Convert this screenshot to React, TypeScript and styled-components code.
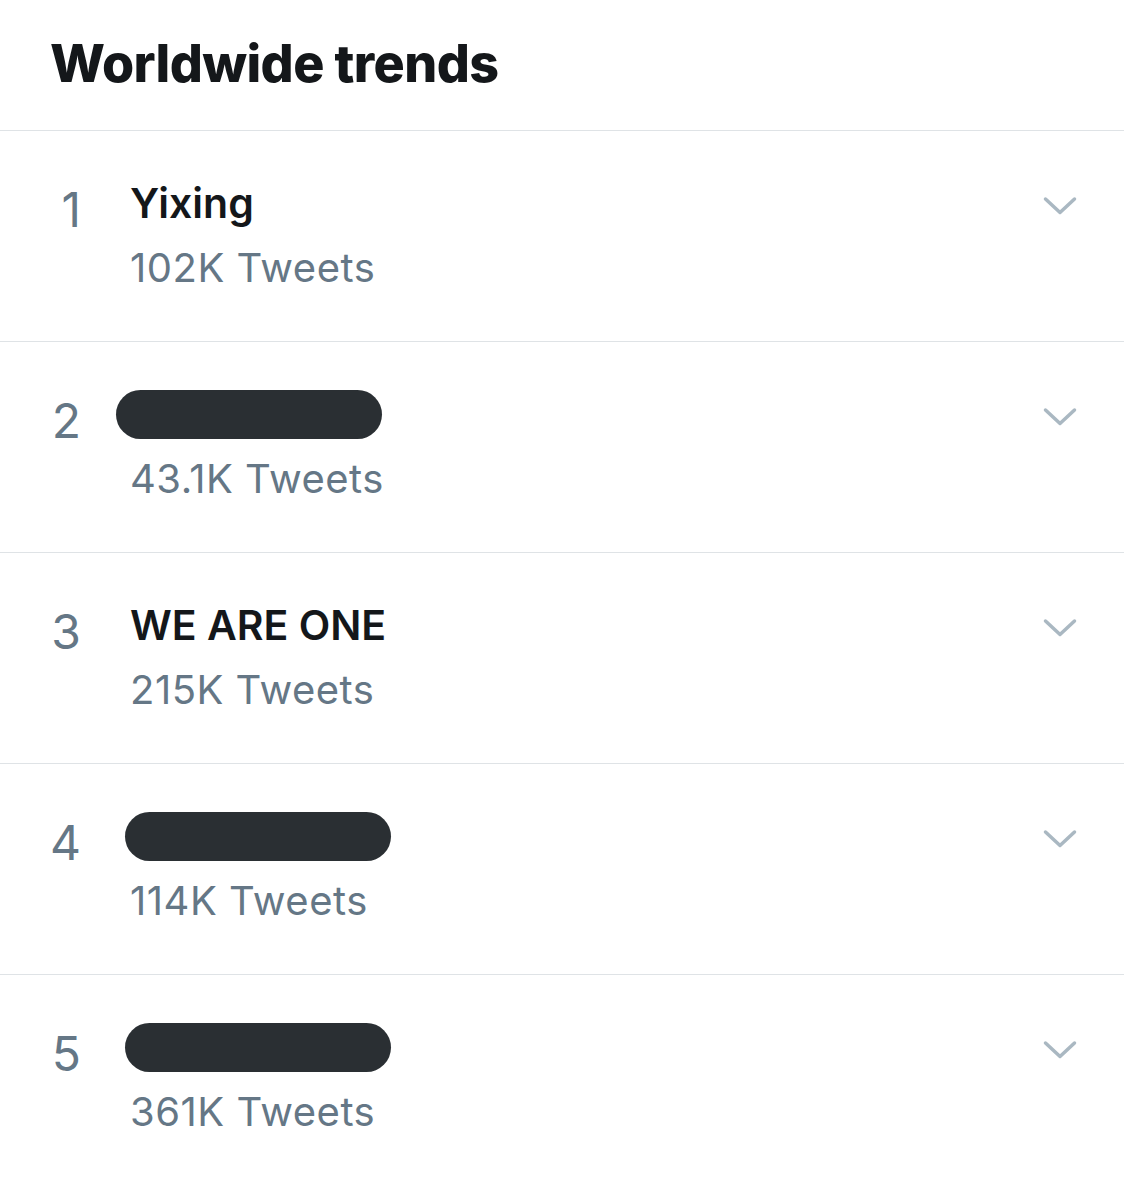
import styled, { createGlobalStyle } from 'styled-components'

const GlobalStyle = createGlobalStyle`
  body {
    margin: 0;
    background: #ffffff;
    font-family: Inter, "Noto Sans", "Liberation Sans", sans-serif;
  }
`

type Trend = {
  rank: number
  name?: string
  hiddenOffset?: number
  tweets: string
}

const trends: Trend[] = [
  { rank: 1, name: 'Yixing', tweets: '102K Tweets' },
  { rank: 2, hiddenOffset: -14, tweets: '43.1K Tweets' },
  { rank: 3, name: 'WE ARE ONE', tweets: '215K Tweets' },
  { rank: 4, hiddenOffset: -5, tweets: '114K Tweets' },
  { rank: 5, hiddenOffset: -5, tweets: '361K Tweets' },
]

export const Page = styled.div`
  width: 1124px;
  height: 1185px;
  overflow: hidden;
  background: #fff;
`

export const Header = styled.header`
  height: 131px;
  box-sizing: border-box;
  padding: 0 50px;
  display: flex;
  align-items: center;
  border-bottom: 1px solid #dfe3e6;
`

export const Title = styled.h1`
  margin: 0;
  padding-bottom: 4px;
  font-size: 52px;
  font-weight: 800;
  letter-spacing: -0.6px;
  color: #14171a;
`

export const TrendList = styled.ul`
  list-style: none;
  margin: 0;
  padding: 0;
`

export const TrendRow = styled.li`
  height: 211px;
  box-sizing: border-box;
  display: flex;
  align-items: flex-start;
  padding: 0 46px 0 50px;
  border-bottom: 1px solid #dfe3e6;

  &:last-child {
    border-bottom: none;
  }
`

export const Rank = styled.span`
  width: 31px;
  margin-top: 50px;
  text-align: right;
  font-size: 48px;
  line-height: 1.2;
  color: #657786;
`

export const Info = styled.div`
  flex: 1;
  display: flex;
  flex-direction: column;
  padding-top: 48px;
  margin-left: 49px;
`

export const TrendName = styled.strong`
  display: block;
  font-size: 41px;
  line-height: 49px;
  font-weight: 600;
  color: #14171a;
`

export const Hidden = styled.span<{ $offset: number }>`
  display: block;
  width: 266px;
  height: 49px;
  border-radius: 25px;
  background: #2a2f33;
  margin-left: ${(p) => p.$offset}px;
`

export const TweetCount = styled.span`
  margin-top: 16px;
  font-size: 40px;
  line-height: 48px;
  letter-spacing: 0.5px;
  color: #657786;
`

export const MoreButton = styled.button`
  margin-top: 63px;
  padding: 0;
  border: none;
  background: none;
  width: 36px;
  height: 24px;
  display: flex;
  align-items: center;
  justify-content: center;
`

function Chevron() {
  return (
    <svg width="34" height="20" viewBox="0 0 34 20" fill="none">
      <polyline
        points="2.5,3 17,16.5 31.5,3"
        stroke="#aab8c2"
        strokeWidth="3.5"
        strokeLinecap="round"
        strokeLinejoin="round"
      />
    </svg>
  )
}

export default function App() {
  return (
    <Page>
      <GlobalStyle />
      <Header>
        <Title>Worldwide trends</Title>
      </Header>
      <TrendList>
        {trends.map((trend) => (
          <TrendRow key={trend.rank}>
            <Rank>{trend.rank}</Rank>
            <Info>
              {trend.name ? (
                <TrendName>{trend.name}</TrendName>
              ) : (
                <Hidden $offset={trend.hiddenOffset ?? 0} />
              )}
              <TweetCount>{trend.tweets}</TweetCount>
            </Info>
            <MoreButton aria-label="More">
              <Chevron />
            </MoreButton>
          </TrendRow>
        ))}
      </TrendList>
    </Page>
  )
}
